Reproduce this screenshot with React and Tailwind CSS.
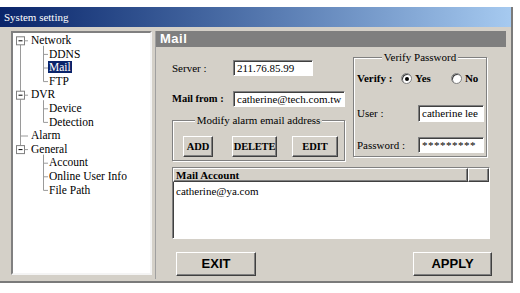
const treeRows = [
  { label: "Network", level: 0 },
  { label: "DDNS", level: 1 },
  { label: "Mail", level: 1, selected: true },
  { label: "FTP", level: 1 },
  { label: "DVR", level: 0 },
  { label: "Device", level: 1 },
  { label: "Detection", level: 1 },
  { label: "Alarm", level: 0 },
  { label: "General", level: 0 },
  { label: "Account", level: 1 },
  { label: "Online User Info", level: 1 },
  { label: "File Path", level: 1 },
];

const ROW = 13.6;
const cy = (i) => 1 + ROW * i + ROW / 2;

const raised =
  "border border-t-white border-l-white border-r-[#404040] border-b-[#404040] shadow-[inset_-1px_-1px_#808080] bg-[#d4d0c8]";
const sunken =
  "border border-t-[#808080] border-l-[#808080] border-r-white border-b-white shadow-[inset_1px_1px_#404040] bg-white";
const etched =
  "border border-[#808080] shadow-[inset_1px_1px_white,1px_1px_white]";

function TreeLines() {
  const stroke = "#9a9a9a";
  const box = (i) => (
    <g key={"b" + i}>
      <rect x="3.5" y={cy(i) - 4} width="8" height="8" fill="white" stroke="#808080" />
      <line x1="5.5" x2="9.5" y1={cy(i)} y2={cy(i)} stroke="black" />
      <line x1="11.5" x2="15" y1={cy(i)} y2={cy(i)} stroke={stroke} />
    </g>
  );
  const kids = (parent, children) => (
    <g key={"k" + parent}>
      <line x1="30.5" x2="30.5" y1={cy(parent) + 5} y2={cy(children[children.length - 1])} stroke={stroke} />
      {children.map((c) => (
        <line key={c} x1="30.5" x2="35" y1={cy(c)} y2={cy(c)} stroke={stroke} />
      ))}
    </g>
  );
  return (
    <svg className="absolute left-0 top-0" width="138" height="170">
      <line x1="7.5" x2="7.5" y1={cy(0) + 4} y2={cy(8) - 4} stroke={stroke} />
      <line x1="7.5" x2="15" y1={cy(7)} y2={cy(7)} stroke={stroke} />
      {kids(0, [1, 2, 3])}
      {kids(4, [5, 6])}
      {kids(8, [9, 10, 11])}
      {box(0)}
      {box(4)}
      {box(8)}
    </svg>
  );
}

function Tree() {
  return (
    <div className="relative w-[141px] h-[244px] bg-white border-t-2 border-l-2 border-t-[#808080] border-l-[#808080] border-r-2 border-b-2 border-r-[#f4f4f4] border-b-[#f4f4f4] text-[11.5px]">
      <TreeLines />
      <div className="relative pt-[1px]">
        {treeRows.map((r) => (
          <div
            key={r.label}
            className={`h-[13.6px] leading-[13.6px] whitespace-nowrap ${r.level === 0 ? "pl-[17px]" : "pl-[35px]"}`}
          >
            <span className={r.selected ? "bg-[#0a246a] text-white px-[1px]" : "px-[1px]"}>{r.label}</span>
          </div>
        ))}
      </div>
    </div>
  );
}

function Radio({ checked, label }) {
  return (
    <div className="flex items-center gap-[3px]">
      <div className="w-[11px] h-[11px] rounded-full border border-[#808080] bg-white grid place-items-center shadow-[inset_1px_1px_#404040]">
        {checked && <div className="w-[4px] h-[4px] rounded-full bg-black" />}
      </div>
      <span className="font-bold">{label}</span>
    </div>
  );
}

function Legend({ children }) {
  return (
    <div className="-mt-[7px] mx-auto w-fit px-[2px] bg-[#d4d0c8] leading-[13px] text-[11px]">{children}</div>
  );
}

function MailPanel() {
  return (
    <div className="ml-[3px] w-[351px] h-[248px] flex flex-col border-l border-[#a0a0a0]">
      <div className="h-[16px] bg-[#7f7f7f] text-white font-[family-name:Liberation_Sans,Arial,sans-serif] font-bold text-[13px] leading-[16px] pl-[4px] tracking-[0.5px]">
        Mail
      </div>
      <div className="pl-[16px] text-[11px]">
        <div className="flex mt-[10px]">
          <div className="w-[174px] pt-[3px]">
            <div className="flex items-center h-[16px]">
              <div className="w-[61px]">Server :</div>
              <div className={`${sunken} w-[80px] h-[16px] leading-[14px] pl-[3px]`}>211.76.85.99</div>
            </div>
            <div className="flex items-center h-[16px] mt-[15px]">
              <div className="w-[61px] font-bold text-[10.5px]">Mail from :</div>
              <div className={`${sunken} w-[112px] h-[16px] leading-[14px] pl-[3px] overflow-hidden whitespace-nowrap`}>
                catherine@tech.com.tw
              </div>
            </div>
            <div className={`${etched} mt-[13px] w-[173px] h-[41px]`}>
              <Legend>Modify alarm email address</Legend>
              <div className="flex mt-[9px] font-bold text-[10.5px]">
                <button className={`${raised} ml-[10px] w-[30px] h-[21px] leading-[19px]`}>ADD</button>
                <button className={`${raised} ml-[19px] w-[45px] h-[21px] leading-[19px] tracking-[-0.2px]`}>DELETE</button>
                <button className={`${raised} ml-[15px] w-[46px] h-[21px] leading-[19px]`}>EDIT</button>
              </div>
            </div>
          </div>
          <div className={`${etched} ml-[7px] w-[134px] h-[100px] flex flex-col`}>
            <Legend>Verify Password</Legend>
            <div className="flex items-center h-[13px] mt-[8px] pl-[3px]">
              <div className="w-[44px] font-bold">Verify :</div>
              <Radio checked label="Yes" />
              <div className="ml-[20px]">
                <Radio label="No" />
              </div>
            </div>
            <div className="flex items-center mt-[20px] pl-[3px]">
              <div className="w-[61px]">User :</div>
              <div className={`${sunken} w-[66px] h-[17px] leading-[15px] pl-[3px] whitespace-nowrap overflow-hidden`}>
                catherine lee
              </div>
            </div>
            <div className="flex items-center mt-[15px] pl-[3px]">
              <div className="w-[61px]">Password :</div>
              <div className={`${sunken} w-[66px] h-[16px] leading-[14px] pl-[3px] tracking-[0.5px] text-black`}>*********</div>
            </div>
          </div>
        </div>
        <div className={`${sunken} mt-[6px] w-[318px] h-[72px] flex flex-col`}>
          <div className="flex h-[14px]">
            <div className={`${raised} w-[295px] h-[14px] leading-[12px] pl-[2px] font-bold`}>Mail Account</div>
            <div className={`${raised} flex-1 h-[14px]`} />
          </div>
          <div className="pl-[3px] mt-[3px] leading-[13px]">catherine@ya.com</div>
        </div>
        <div className="flex justify-between w-[320px] pl-[4px] mt-[13px] font-[family-name:Liberation_Sans,Arial,sans-serif] font-bold text-[13px]">
          <button className={`${raised} w-[80px] h-[24px]`}>EXIT</button>
          <button className={`${raised} w-[79px] h-[24px]`}>APPLY</button>
        </div>
      </div>
    </div>
  );
}

export default function App() {
  return (
    <div className="w-[520px] h-[293px] bg-white pt-[7px] font-[family-name:Liberation_Serif,Times_New_Roman,serif] text-[11px] text-black">
      <div className="w-[513px] h-[276px] bg-[#d4d0c8] border-b-2 border-r-2 border-[#7a7a7a] flex flex-col">
        <div className="h-[20px] bg-gradient-to-r from-[#0a246a] to-[#a6caf0] text-white text-[11px] leading-[20px] pl-[4px]">
          System setting
        </div>
        <div className="flex pt-[4px] pl-[11px]">
          <Tree />
          <MailPanel />
        </div>
      </div>
    </div>
  );
}
